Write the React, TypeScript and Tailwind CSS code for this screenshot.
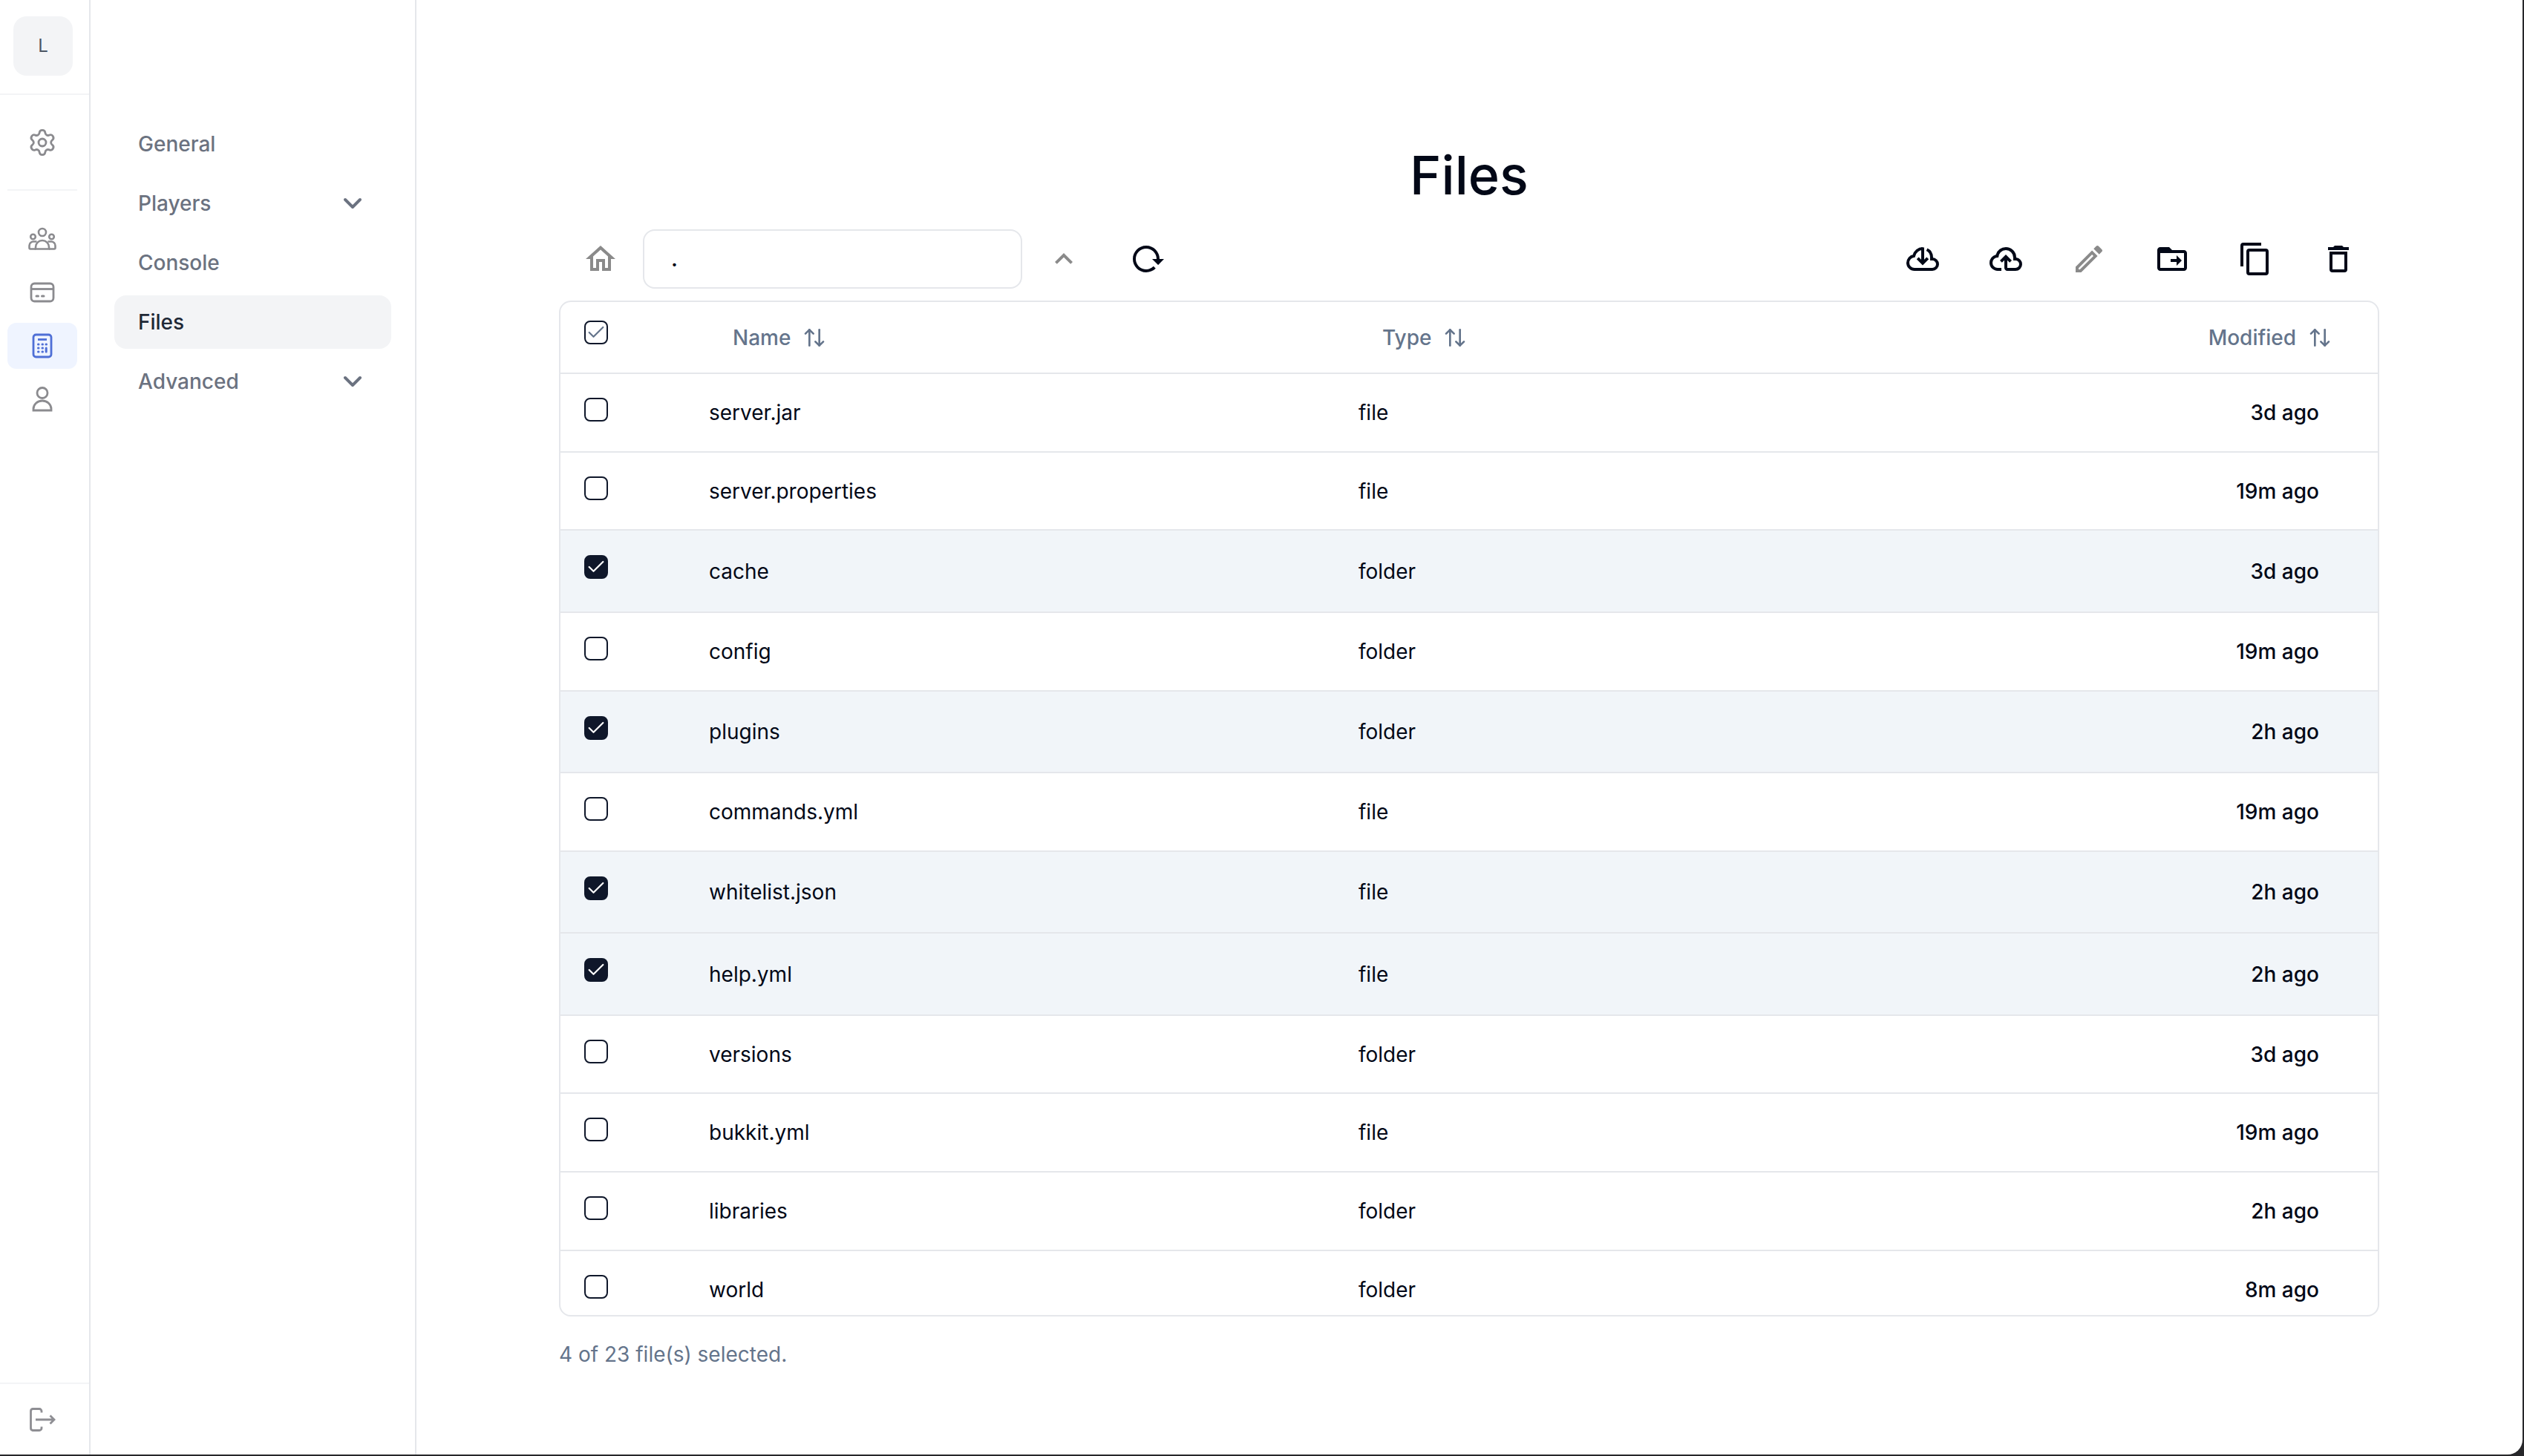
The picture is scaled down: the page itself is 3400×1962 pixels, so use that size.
import { ArrowUpDown, Check, ChevronDown, Settings } from "lucide-react";

const INK = "text-[#020817]";
const MUTED = "text-[#8a8a8a]";

const mdi = {
  home: "M12 5.69L17 10.19V18H15V12H9V18H7V10.19L12 5.69M12 3L2 12H5V20H11V14H13V20H19V12H22L12 3Z",
  up: "M7.41,15.41L12,10.83L16.59,15.41L18,14L12,8L6,14L7.41,15.41Z",
  reload:
    "M2 12C2 16.97 6.03 21 11 21C13.39 21 15.68 20.06 17.4 18.4L15.9 16.9C14.63 18.25 12.86 19 11 19C4.76 19 1.64 11.46 6.05 7.05C10.46 2.64 18 5.77 18 12H15L19 16H19.1L23 12H20C20 7.03 15.97 3 11 3C6.03 3 2 7.03 2 12Z",
  cloudUp:
    "M6.5 20Q4.22 20 2.61 18.43 1 16.85 1 14.58 1 12.63 2.17 11.1 3.35 9.57 5.25 9.15 5.88 6.85 7.75 5.43 9.63 4 12 4 14.93 4 16.96 6.04 19 8.07 19 11 20.73 11.2 21.86 12.5 23 13.78 23 15.5 23 17.38 21.69 18.69 20.38 20 18.5 20H13Q12.18 20 11.59 19.41 11 18.83 11 18V12.85L9.4 14.4L8 13L12 9L16 13L14.6 14.4L13 12.85V18H18.5Q19.55 18 20.27 17.27 21 16.55 21 15.5 21 14.45 20.27 13.73 19.55 13 18.5 13H17V11Q17 8.93 15.54 7.46 14.08 6 12 6 9.93 6 8.46 7.46 7 8.93 7 11H6.5Q5.05 11 4.03 12.03 3 13.05 3 14.5 3 15.95 4.03 17 5.05 18 6.5 18H9V20Z",
  pencil:
    "M14.06,9L15,9.94L5.92,19H5V18.08L14.06,9M17.66,3C17.41,3 17.15,3.1 16.96,3.29L15.13,5.12L18.88,8.87L20.71,7.04C21.1,6.65 21.1,6 20.71,5.63L18.37,3.29C18.17,3.09 17.92,3 17.66,3M14.06,6.19L3,17.25V21H6.75L17.81,9.94L14.06,6.19Z",
  folderMove:
    "M20 18H4V8H20M20 6H12L10 4H4C2.89 4 2 4.89 2 6V18C2 19.11 2.9 20 4 20H20C21.11 20 22 19.11 22 18V8C22 6.9 21.1 6 20 6M15 9.5V12H11V14H15V16.5L18.5 13L15 9.5Z",
  copy: "M19,21H8V7H19M19,5H8A2,2 0 0,0 6,7V21A2,2 0 0,0 8,23H19A2,2 0 0,0 21,21V7A2,2 0 0,0 19,5M16,1H4A2,2 0 0,0 2,3V17H4V3H16V1Z",
  trash: "M6,19A2,2 0 0,0 8,21H16A2,2 0 0,0 18,19V7H6V19M8,9H16V19H8V9M15.5,4L14.5,3H9.5L8.5,4H5V6H19V4H15.5Z",
};

const files = [
  { name: "server.jar", type: "file", modified: "3d ago", selected: false },
  { name: "server.properties", type: "file", modified: "19m ago", selected: false },
  { name: "cache", type: "folder", modified: "3d ago", selected: true },
  { name: "config", type: "folder", modified: "19m ago", selected: false },
  { name: "plugins", type: "folder", modified: "2h ago", selected: true },
  { name: "commands.yml", type: "file", modified: "19m ago", selected: false },
  { name: "whitelist.json", type: "file", modified: "2h ago", selected: true },
  { name: "help.yml", type: "file", modified: "2h ago", selected: true },
  { name: "versions", type: "folder", modified: "3d ago", selected: false },
  { name: "bukkit.yml", type: "file", modified: "19m ago", selected: false },
  { name: "libraries", type: "folder", modified: "2h ago", selected: false },
  { name: "world", type: "folder", modified: "8m ago", selected: false },
];

function MdiIcon({ d, className }: { d: string; className?: string }) {
  return (
    <svg viewBox="0 0 24 24" fill="currentColor" className={`w-[48px] h-[48px] shrink-0 ${className ?? ""}`}>
      <path d={d} />
    </svg>
  );
}

function CloudDownload() {
  return (
    <svg viewBox="0 0 24 24" fill="none" stroke="currentColor" strokeWidth="2" className={`w-[48px] h-[48px] shrink-0 ${INK}`}>
      <path d="M12 5C9.2 5 6.7 7 6 10 3.8 10.2 2 12.2 2 14.6 2 17 4 19 6.5 19H18.5C20.4 19 22 17.4 22 15.5 22 13.6 20.4 12 18.5 12H18V11C18 8.6 16.7 6.5 14.8 5.6" />
      <path d="M12 4.2V14" />
      <path d="M8.6 11.4 12 14.8 15.4 11.4" />
    </svg>
  );
}

function RailIcon({ children, active }: { children: React.ReactNode; active?: boolean }) {
  return (
    <div
      className={`ml-[10px] w-[94px] h-[62px] rounded-[12px] flex items-center justify-center ${
        active ? "bg-[#eff4ff] text-[#4f6fd6]" : "text-[#8b8b8f]"
      }`}
    >
      {children}
    </div>
  );
}

function Rail() {
  return (
    <aside className="w-[122px] shrink-0 flex flex-col border-r-2 border-[#e5e7eb]">
      <div className="h-[128px] shrink-0 border-b-2 border-[#f3f4f6] pt-[22px] pl-[18px]">
        <div className="w-[80px] h-[80px] rounded-[18px] bg-[#f3f4f6] flex items-center justify-center text-[24px] text-[#4b5563]">
          L
        </div>
      </div>
      <div className="pt-[33px]">
        <RailIcon>
          <Settings size={40} strokeWidth={1.7} />
        </RailIcon>
      </div>
      <div className="ml-[10px] w-[94px] h-[2px] mt-[32px] bg-[#f3f4f6]" />
      <div className="mt-[34px] flex flex-col gap-[10px]">
        <RailIcon>
          <svg width="40" height="40" viewBox="0 0 40 40" fill="none" stroke="currentColor" strokeWidth="2.6">
            <circle cx="20" cy="11" r="5" />
            <circle cx="7.5" cy="17" r="3.3" />
            <circle cx="32.5" cy="17" r="3.3" />
            <path d="M11 33.5V31A9 9 0 0 1 29 31V33.5Z" />
            <path d="M11 33.5H4C3 33.5 2.5 33 2.5 32V29C2.5 26 5 23.5 8 23.5H12.5" />
            <path d="M29 33.5H36C37 33.5 37.5 33 37.5 32V29C37.5 26 35 23.5 32 23.5H27.5" />
          </svg>
        </RailIcon>
        <RailIcon>
          <svg width="36" height="30" viewBox="0 0 36 30" fill="none" stroke="currentColor" strokeWidth="2.8">
            <rect x="3" y="3" width="30" height="24" rx="4.5" />
            <path d="M3 10.5H33" />
            <path d="M10 20H12.5M17.5 20H20" strokeLinecap="round" strokeWidth="3" />
          </svg>
        </RailIcon>
        <RailIcon active>
          <svg width="30" height="36" viewBox="0 0 30 36" fill="none" stroke="currentColor" strokeWidth="2.8">
            <rect x="3" y="3" width="24" height="30" rx="3.5" />
            <path d="M9 9.5H21" />
            <path d="M9.5 16H10M15 16H15.5M20 16H20.5M9.5 21H10M15 21H15.5M9.5 26H10M15 26H15.5M20.2 21V26" strokeLinecap="round" strokeWidth="3" />
          </svg>
        </RailIcon>
        <RailIcon>
          <svg width="30" height="36" viewBox="0 0 30 36" fill="none" stroke="currentColor" strokeWidth="2.8">
            <circle cx="15" cy="9.5" r="7" />
            <path d="M3 33V31A12 11 0 0 1 27 31V33Z" />
          </svg>
        </RailIcon>
      </div>
      <div className="mt-auto h-[97px] border-t-2 border-[#f3f4f6] flex items-center pl-[40px] text-[#8e8e93]">
        <svg width="36" height="32" viewBox="0 0 36 32" fill="none" stroke="currentColor" strokeWidth="2.8">
          <path d="M16 6.5V4.5A3 3 0 0 0 13 1.5H4A3 3 0 0 0 1.5 4.5V27.5A3 3 0 0 0 4 30.5H13A3 3 0 0 0 16 27.5V25.5" />
          <path d="M8 16H33M27.5 10.5 33 16 27.5 21.5" />
        </svg>
      </div>
    </aside>
  );
}

function NavItem({ label, active, chevron }: { label: string; active?: boolean; chevron?: boolean }) {
  return (
    <div
      className={`h-[72px] rounded-[16px] pl-[32px] pr-[32px] flex items-center justify-between text-[28px] font-medium ${
        active ? "bg-[#f3f4f6] text-[#1f2937]" : "text-[#6b7280]"
      }`}
    >
      <span>{label}</span>
      {chevron && <ChevronDown size={40} strokeWidth={2.4} />}
    </div>
  );
}

function Box({ checked, header }: { checked?: boolean; header?: boolean }) {
  return (
    <div
      className={`w-[32px] h-[32px] rounded-[8px] border-2 border-[#0f172a] flex items-center justify-center ${
        checked ? "bg-[#0f172a] text-white" : "text-[#64748b]"
      }`}
    >
      {(checked || header) && <Check size={28} strokeWidth={1.9} className="shrink-0" />}
    </div>
  );
}

function HeaderLabel({ label }: { label: string }) {
  return (
    <div className="flex items-center text-[28px] font-medium text-[#64748b]">
      <span>{label}</span>
      <ArrowUpDown size={32} className="ml-[16px]" />
    </div>
  );
}

function FileRow({ file }: { file: (typeof files)[number] }) {
  return (
    <div
      className={`grid grid-cols-[200px_875px_1fr_auto] items-center border-b-2 border-[#e5e7eb] text-[28px] ${INK} ${
        file.selected ? "h-[110.5px] bg-[#f1f5f9]" : "h-[105.7px]"
      }`}
    >
      <div className={`self-start pl-[32px] ${file.selected ? "pt-[33px]" : "pt-[32px]"}`}>
        <Box checked={file.selected} />
      </div>
      <div>{file.name}</div>
      <div>{file.type}</div>
      <div className="pr-[79px] text-right font-medium">{file.modified}</div>
    </div>
  );
}

export default function App() {
  return (
    <div className="w-[3400px] h-[1962px] bg-[#27272a] overflow-hidden font-['Inter',sans-serif]">
      <div className="w-[3398px] h-[1960px] bg-white rounded-br-[20px] overflow-hidden flex">
        <Rail />

        <nav className="w-[439px] shrink-0 border-r-2 border-[#e5e7eb] pt-[158px] px-[32px] flex flex-col gap-[8px]">
          <NavItem label="General" />
          <NavItem label="Players" chevron />
          <NavItem label="Console" />
          <NavItem label="Files" active />
          <NavItem label="Advanced" chevron />
        </nav>

        <main className="flex-1 min-w-0 pt-[196px] pr-[1px] flex flex-col items-center">
          <h1 className={`h-[80px] leading-[80px] text-[72px] font-medium ${INK}`}>Files</h1>

          <div className="w-[2452px] mt-[33px]">
            {/* Toolbar */}
            <div className="h-[80px] flex items-center pl-[32px] pr-[31px]">
              <MdiIcon d={mdi.home} className={MUTED} />
              <input
                readOnly
                value="."
                className={`ml-[33px] w-[511px] h-[80px] rounded-[16px] border-2 border-[#e5e7eb] pl-[36px] text-[28px] font-semibold outline-none ${INK}`}
              />
              <MdiIcon d={mdi.up} className={`ml-[32px] ${MUTED}`} />
              <MdiIcon d={mdi.reload} className={`ml-[65px] ${INK}`} />
              <div className="ml-auto flex items-center gap-[64px]">
                <CloudDownload />
                <MdiIcon d={mdi.cloudUp} className={INK} />
                <MdiIcon d={mdi.pencil} className={MUTED} />
                <MdiIcon d={mdi.folderMove} className={INK} />
                <MdiIcon d={mdi.copy} className={INK} />
                <MdiIcon d={mdi.trash} className={INK} />
              </div>
            </div>

            {/* Table */}
            <div className="mt-[16px] h-[1369px] rounded-[16px] border-2 border-[#e5e7eb] overflow-hidden">
              <div className="h-[97px] grid grid-cols-[200px_875px_1fr_auto] items-center border-b-2 border-[#e5e7eb]">
                <div className="self-start pl-[32px] pt-[25px]">
                  <Box header />
                </div>
                <div className="pl-[32px]">
                  <HeaderLabel label="Name" />
                </div>
                <div className="pl-[32px]">
                  <HeaderLabel label="Type" />
                </div>
                <div className="pr-[62px]">
                  <HeaderLabel label="Modified" />
                </div>
              </div>
              {files.map((file) => (
                <FileRow key={file.name} file={file} />
              ))}
            </div>

            <p className="mt-[31px] text-[28px] leading-[40px] text-[#64748b]">4 of 23 file(s) selected.</p>
          </div>
        </main>
      </div>
    </div>
  );
}
